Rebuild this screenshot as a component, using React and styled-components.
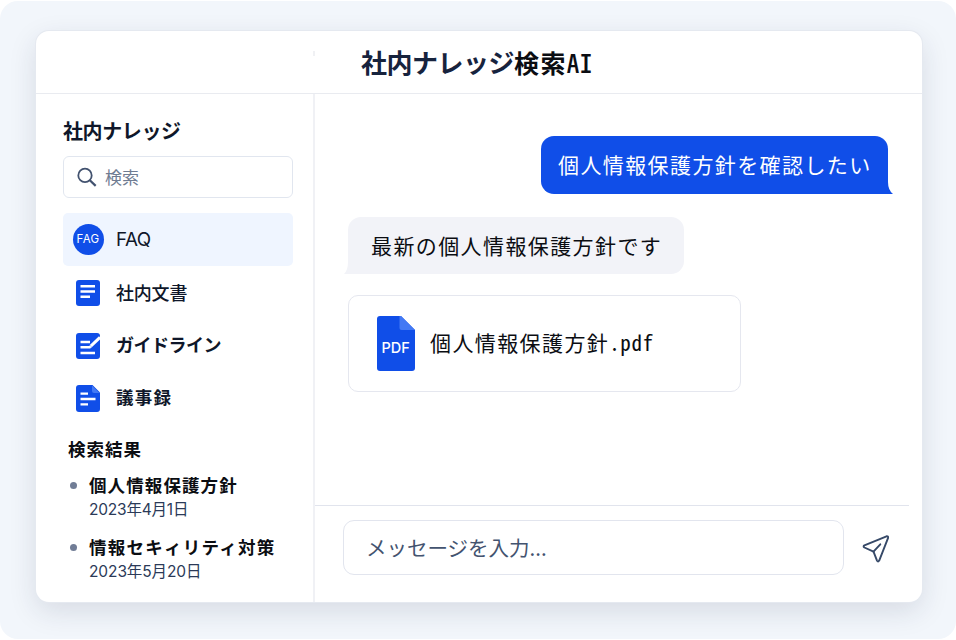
import React from "react"
import styled, { createGlobalStyle } from "styled-components"

const GlobalStyle = createGlobalStyle`
  * {
    box-sizing: border-box;
  }
  body {
    margin: 0;
    background: #fff;
    font-family: "Noto Sans CJK JP", sans-serif;
    color: #0f172a;
  }
`

const Page = styled.div`
  width: 956px;
  height: 640px;
  padding-top: 1px;
  overflow: hidden;
`

const Backdrop = styled.div`
  height: 638px;
  padding: 30px 34px 36px 36px;
  border-radius: 18px;
  overflow: hidden;
  background: #f2f6fb;
`

const Card = styled.div`
  display: flex;
  flex-direction: column;
  width: 886px;
  height: 571px;
  border-radius: 13px;
  background: #fff;
  box-shadow: 0 0 0 1px #e5e9f0, 0 9px 28px rgba(30, 41, 70, 0.13);
`

const Header = styled.header`
  position: relative;
  height: 63px;
  padding-left: 325px;
  display: flex;
  align-items: center;
  border-bottom: 1px solid #e9ebf0;
  &::after {
    content: "";
    position: absolute;
    left: 277px;
    top: 20px;
    width: 2px;
    height: 5px;
    background: #f0f1f4;
  }
`

const Label = styled.span`
  display: block;
  white-space: pre;
  font-family: ${(p) => p.$font || "inherit"};
  font-size: ${(p) => p.$size}px;
  line-height: ${(p) => p.$line || 26}px;
  font-weight: ${(p) => p.$weight || 400};
  letter-spacing: ${(p) => p.$spacing || 0}px;
  color: ${(p) => p.$color || "#0f172a"};
`

const HalfWidth = styled.span`
  font-feature-settings: "hwid";
  font-weight: ${(p) => p.$weight || "inherit"};
  letter-spacing: ${(p) => p.$spacing || 0}px;
`

const Content = styled.div`
  flex: 1;
  display: flex;
  min-height: 0;
`

const Sidebar = styled.aside`
  width: 279px;
  padding: 24px 20px 0 27px;
  border-right: 2px solid #f0f1f5;
`

const SidebarTitle = styled.div`
  height: 38px;
`

const SearchBox = styled.div`
  display: flex;
  align-items: center;
  gap: 8px;
  height: 42px;
  width: 230px;
  padding-left: 13px;
  border: 1px solid #e1e6ef;
  border-radius: 6px;
`

const Nav = styled.nav`
  margin-top: 15px;
  width: 230px;
`

const NavItem = styled.div`
  display: flex;
  align-items: center;
  height: ${(p) => p.$height || 53}px;
  border-radius: 5px;
  background: ${(p) => (p.$active ? "#eff5ff" : "transparent")};
`

const NavText = styled.div`
  padding-bottom: ${(p) => p.$lift || 0}px;
`

const IconCell = styled.div`
  display: flex;
  justify-content: center;
  width: 49px;
  margin-right: 4px;
`

const FaqBadge = styled.div`
  width: 31px;
  height: 31px;
  margin-left: 1px;
  border-radius: 50%;
  background: #104ee8;
  color: #fff;
  font: 400 11.5px/31px Inter, sans-serif;
  letter-spacing: 0.3px;
  text-align: center;
`

const Results = styled.div`
  padding: 12px 0 0 5px;
`

const ResultItem = styled.div`
  display: flex;
  margin-top: ${(p) => p.$top}px;
`

const Bullet = styled.span`
  flex: none;
  width: 7px;
  height: 7px;
  margin: 10px 12px 0 2px;
  border-radius: 50%;
  background: #717d96;
`

const ResultDate = styled.div`
  padding-top: 1px;
  font-family: Inter, "Noto Sans CJK JP", sans-serif;
  font-size: 15.5px;
  line-height: 22px;
  white-space: nowrap;
  color: #2b3a58;
  letter-spacing: ${(p) => p.$spacing}px;
`

const Chat = styled.main`
  flex: 1;
  display: flex;
  flex-direction: column;
`

const Messages = styled.div`
  flex: 1;
  display: flex;
  flex-direction: column;
  align-items: flex-start;
  padding: 42px 34px 0 33px;
`

const Bubble = styled.div`
  position: relative;
  display: flex;
  align-items: center;
  width: ${(p) => p.$width}px;
  height: ${(p) => p.$height}px;
  padding: 0 0 2px ${(p) => p.$pad}px;
  align-self: ${(p) => (p.$own ? "flex-end" : "flex-start")};
  border-radius: ${(p) => (p.$own ? "13px 13px 0 13px" : "13px 13px 13px 0")};
  background: ${(p) => (p.$own ? "#104ee8" : "#f2f3f8")};
  margin-bottom: ${(p) => p.$gap || 0}px;
`

const Tail = styled.svg`
  position: absolute;
  bottom: 0;
  ${(p) => (p.$side === "right" ? "left: 100%;" : "right: 100%;")}
`

const FileCard = styled.div`
  display: flex;
  align-items: center;
  gap: 15px;
  width: 393px;
  height: 97px;
  padding-left: 28px;
  border: 1px solid #e5e7ef;
  border-radius: 10px;
`

const FileName = styled.div`
  padding-bottom: 4px;
`

const Composer = styled.div`
  display: flex;
  align-items: center;
  height: 97px;
  margin-right: 13px;
  padding: 0 0 13px 28px;
  border-top: 1px solid #e1e4ed;
`

const MessageInput = styled.div`
  display: flex;
  align-items: center;
  width: 501px;
  height: 55px;
  padding: 0 0 2px 22px;
  border: 1px solid #e2e5ee;
  border-radius: 11px;
`

const SendButton = styled.div`
  display: flex;
  margin: 2px 0 0 18px;
`

const SearchIcon = () => (
  <svg width="20" height="20" viewBox="0 0 20 20" fill="none" stroke="#42526f" strokeWidth="1.8">
    <circle cx="8" cy="8.4" r="6.7" />
    <path d="M12.8 13.2L18.7 18.9" strokeWidth="2.2" />
  </svg>
)

const DocumentIcon = () => (
  <svg width="24" height="26" viewBox="0 0 24 26">
    <rect width="24" height="26" rx="3" fill="#104ee8" />
    <path d="M4.5 6.3H19M4.5 11.5H19M4.5 16.8H14" stroke="#fff" strokeWidth="2.4" />
  </svg>
)

const GuideIcon = () => (
  <svg width="24" height="26" viewBox="0 0 24 26">
    <rect width="24" height="26" rx="3" fill="#104ee8" />
    <path d="M4.5 9H14M4.5 14.2H14.5M4.5 20H19" stroke="#fff" strokeWidth="2.4" />
    <path d="M14.8 13.2L24 4.3" stroke="#fff" strokeWidth="3" />
    <path d="M13.6 12.2L16 14.4L13.2 15Z" fill="#fff" />
  </svg>
)

const MinutesIcon = () => (
  <svg width="24" height="27" viewBox="0 0 24 27">
    <path d="M3 0H16.5L24 7.5V24A3 3 0 0 1 21 27H3A3 3 0 0 1 0 24V3A3 3 0 0 1 3 0Z" fill="#104ee8" />
    <path d="M16 0.5L23.5 8H18A2 2 0 0 1 16 6Z" fill="#4379f4" />
    <path d="M4.5 8.6H12M4.5 14H19.5M4.5 19.4H12" stroke="#fff" strokeWidth="2.4" />
  </svg>
)

const PdfIcon = () => (
  <svg width="38" height="55" viewBox="0 0 38 55">
    <path d="M3 0H24L38 14V52A3 3 0 0 1 35 55H3A3 3 0 0 1 0 52V3A3 3 0 0 1 3 0Z" fill="#104ee8" />
    <path d="M22.5 0H24L38 14H24.5A2 2 0 0 1 22.5 12Z" fill="#4379f4" />
    <text x="18.7" y="37.3" textAnchor="middle" fill="#fff" fontFamily="Inter, sans-serif" fontSize="14.5" fontWeight="500">
      PDF
    </text>
  </svg>
)

const SendIcon = () => (
  <svg
    width="28"
    height="28"
    viewBox="0 0 28 28"
    fill="none"
    stroke="#364968"
    strokeWidth="1.9"
    strokeLinejoin="round"
    strokeLinecap="round"
  >
    <path d="M24.5 1.3L2.4 10.4Q0.8 11.4 2.4 12.5L11.5 16.7L15 25.6Q16 27.5 17.2 25.6L26.1 2.8Q26.4 1 24.5 1.3Z" />
    <path d="M11.5 16.7L18.3 9.3" />
  </svg>
)

const navItems = [
  { label: "社内文書", icon: <DocumentIcon />, height: 54, size: 18, weight: 500, spacing: -0.2, lift: 2 },
  { label: "ガイドライン", icon: <GuideIcon />, height: 52, size: 18, weight: 700, spacing: -0.5, lift: 4 },
  { label: "議事録", icon: <MinutesIcon />, height: 52, size: 17.5, weight: 700, spacing: 1.2, lift: 2 },
]

const results = [
  { title: "個人情報保護方針", date: "2023年4月1日", top: 10, spacing: 1.1, dateSpacing: -0.2 },
  { title: "情報セキィリティ対策", date: "2023年5月20日", top: 13, spacing: 1.25, dateSpacing: -0.1 },
]

export default function App() {
  return (
    <>
      <GlobalStyle />
      <Page>
        <Backdrop>
          <Card>
            <Header>
              <Label $size={26} $line={36} $weight={700} $spacing={-0.5} $color="#17233d">
                社内ナレッジ
              </Label>
              <Label $size={25} $line={36} $weight={700} $spacing={1.4} $color="#0b0d12">
                検索
                <HalfWidth $spacing={0.5} $weight={500}>
                  AI
                </HalfWidth>
              </Label>
            </Header>
            <Content>
              <Sidebar>
                <SidebarTitle>
                  <Label $size={20} $weight={700} $spacing={-0.4}>
                    社内ナレッジ
                  </Label>
                </SidebarTitle>
                <SearchBox>
                  <SearchIcon />
                  <Label $size={17} $color="#6f7c92">
                    検索
                  </Label>
                </SearchBox>
                <Nav>
                  <NavItem $active>
                    <IconCell>
                      <FaqBadge>FAG</FaqBadge>
                    </IconCell>
                    <Label $font="Inter, sans-serif" $size={18.8} $spacing={-0.5}>
                      FAQ
                    </Label>
                  </NavItem>
                  {navItems.map((item) => (
                    <NavItem key={item.label} $height={item.height}>
                      <IconCell>{item.icon}</IconCell>
                      <NavText $lift={item.lift}>
                        <Label $size={item.size} $weight={item.weight} $spacing={item.spacing}>
                          {item.label}
                        </Label>
                      </NavText>
                    </NavItem>
                  ))}
                </Nav>
                <Results>
                  <Label $size={17.5} $weight={700} $spacing={1} $color="#0b0d12">
                    検索結果
                  </Label>
                  {results.map((item) => (
                    <ResultItem key={item.title} $top={item.top}>
                      <Bullet />
                      <div>
                        <Label $size={17.5} $weight={700} $spacing={item.spacing} $color="#0b0d12">
                          {item.title}
                        </Label>
                        <ResultDate $spacing={item.dateSpacing}>{item.date}</ResultDate>
                      </div>
                    </ResultItem>
                  ))}
                </Results>
              </Sidebar>
              <Chat>
                <Messages>
                  <Bubble $own $width={347} $height={58} $pad={17} $gap={23}>
                    <Label $size={21} $spacing={1.4} $color="#fff">
                      個人情報保護方針を確認したい
                    </Label>
                    <Tail $side="right" width="5" height="12" viewBox="0 0 5 12">
                      <path d="M0 0Q0 8 5 12H0Z" fill="#104ee8" />
                    </Tail>
                  </Bubble>
                  <Bubble $width={336} $height={57} $pad={23} $gap={21}>
                    <Label $size={21} $spacing={1.4} $color="#0b0d12">
                      最新の個人情報保護方針です
                    </Label>
                    <Tail $side="left" width="4" height="12" viewBox="0 0 4 12">
                      <path d="M4 0Q4 8 0 12H4Z" fill="#f2f3f8" />
                    </Tail>
                  </Bubble>
                  <FileCard>
                    <PdfIcon />
                    <FileName>
                      <Label $size={21} $spacing={1.4} $color="#0b0d12">
                        個人情報保護方針<HalfWidth $spacing={0.6}>.pdf</HalfWidth>
                      </Label>
                    </FileName>
                  </FileCard>
                </Messages>
                <Composer>
                  <MessageInput>
                    <Label $size={20.5} $color="#43536f">
                      メッセージを入力...
                    </Label>
                  </MessageInput>
                  <SendButton>
                    <SendIcon />
                  </SendButton>
                </Composer>
              </Chat>
            </Content>
          </Card>
        </Backdrop>
      </Page>
    </>
  )
}
